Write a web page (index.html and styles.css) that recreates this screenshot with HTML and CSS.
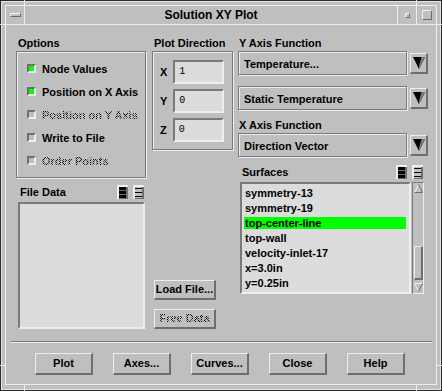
FILE: index.html
```html
<!DOCTYPE html>
<html>
<head>
<meta charset="utf-8">
<title>Solution XY Plot</title>
<link rel="stylesheet" href="styles.css">
</head>
<body>
<div class="win">
  <div class="frame">
    <div class="titlebar">
      <div class="tb-menu"><span class="tb-dash"></span></div>
      <div class="tb-title">Solution XY Plot</div>
      <div class="tb-min"><span class="tb-minbox"></span></div>
      <div class="tb-max"><span class="tb-maxbox"></span></div>
    </div>
    <div class="client">
      <div class="top">
        <div class="col1">
          <div class="lbl pl2">Options</div>
          <div class="etched options">
            <div class="opt"><span class="cb on"></span><span>Node Values</span></div>
            <div class="opt"><span class="cb on"></span><span>Position on X Axis</span></div>
            <div class="opt"><span class="cb"></span><span class="dis">Position on Y Axis</span></div>
            <div class="opt"><span class="cb"></span><span>Write to File</span></div>
            <div class="opt"><span class="cb"></span><span class="dis">Order Points</span></div>
          </div>
          <div class="listhead fdhead">
            <span class="hlbl fdlbl">File Data</span>
            <span class="icons">
              <svg class="ico" width="11" height="14" viewBox="0 0 11 14"><rect width="11" height="14" fill="#eeeeee"/><rect x="2" y="2" width="9" height="12" fill="#6e6e6e"/><rect x="2" y="2" width="7" height="3" fill="#000"/><rect x="2" y="6" width="7" height="3" fill="#000"/><rect x="2" y="10" width="7" height="3" fill="#000"/></svg>
              <svg class="ico" width="11" height="14" viewBox="0 0 11 14"><rect width="11" height="14" fill="#eeeeee"/><rect x="2" y="2" width="9" height="12" fill="#6e6e6e"/><rect x="2" y="2" width="7" height="11" fill="#bfbfbf"/><rect x="2" y="3" width="7" height="1" fill="#000"/><rect x="2" y="7" width="7" height="1" fill="#000"/><rect x="2" y="11" width="7" height="1" fill="#000"/></svg>
            </span>
          </div>
          <div class="sunken fdlist"></div>
        </div>
        <div class="col2">
          <div class="lbl pl2">Plot Direction</div>
          <div class="etched dir">
            <div class="dirrow"><span class="axl">X</span><span class="sunken field">1</span></div>
            <div class="dirrow"><span class="axl">Y</span><span class="sunken field">0</span></div>
            <div class="dirrow"><span class="axl">Z</span><span class="sunken field">0</span></div>
          </div>
          <div class="btn raised load">Load File...</div>
          <div class="btn raised free"><span class="dis">Free Data</span></div>
        </div>
        <div class="col3">
          <div class="lbl pl1">Y Axis Function</div>
          <div class="dd">
            <div class="etched ddbox">Temperature...</div>
            <div class="raised ddarrow"><svg width="12" height="12" viewBox="0 0 12 12"><polygon points="0,0 12,0 6,12" fill="#000"/><polygon points="8.5,0 12,0 6,12 6,9" fill="#7a7a7a"/></svg></div>
          </div>
          <div class="dd dd2">
            <div class="etched ddbox">Static Temperature</div>
            <div class="raised ddarrow"><svg width="12" height="12" viewBox="0 0 12 12"><polygon points="0,0 12,0 6,12" fill="#000"/><polygon points="8.5,0 12,0 6,12 6,9" fill="#7a7a7a"/></svg></div>
          </div>
          <div class="lbl pl1 xlbl">X Axis Function</div>
          <div class="dd">
            <div class="etched ddbox">Direction Vector</div>
            <div class="raised ddarrow"><svg width="12" height="12" viewBox="0 0 12 12"><polygon points="0,0 12,0 6,12" fill="#000"/><polygon points="8.5,0 12,0 6,12 6,9" fill="#7a7a7a"/></svg></div>
          </div>
          <div class="listhead sfhead">
            <span class="hlbl sflbl">Surfaces</span>
            <span class="icons">
              <svg class="ico" width="11" height="14" viewBox="0 0 11 14"><rect width="11" height="14" fill="#eeeeee"/><rect x="2" y="2" width="9" height="12" fill="#6e6e6e"/><rect x="2" y="2" width="7" height="3" fill="#000"/><rect x="2" y="6" width="7" height="3" fill="#000"/><rect x="2" y="10" width="7" height="3" fill="#000"/></svg>
              <svg class="ico" width="11" height="14" viewBox="0 0 11 14"><rect width="11" height="14" fill="#eeeeee"/><rect x="2" y="2" width="9" height="12" fill="#6e6e6e"/><rect x="2" y="2" width="7" height="11" fill="#bfbfbf"/><rect x="2" y="3" width="7" height="1" fill="#000"/><rect x="2" y="7" width="7" height="1" fill="#000"/><rect x="2" y="11" width="7" height="1" fill="#000"/></svg>
            </span>
          </div>
          <div class="sfwrap">
            <div class="sunken items">
              <div class="item">symmetry-13</div>
              <div class="item">symmetry-19</div>
              <div class="item sel">top-center-line</div>
              <div class="item">top-wall</div>
              <div class="item">velocity-inlet-17</div>
              <div class="item">x=3.0in</div>
              <div class="item">y=0.25in</div>
            </div>
            <div class="sb">
              <svg class="arr" width="9" height="9" viewBox="0 0 9 9"><polygon points="4.5,0.5 8.5,8.5 0.5,8.5" fill="#bfbfbf"/><polyline points="0.5,8.5 4.5,0.5" stroke="#f0f0f0" fill="none"/><polyline points="4.5,0.5 8.5,8.5 0.5,8.5" stroke="#6e6e6e" fill="none"/></svg>
              <div class="track"><div class="slider"></div></div>
              <svg class="arr" width="9" height="9" viewBox="0 0 9 9"><polygon points="0.5,0.5 8.5,0.5 4.5,8.5" fill="#bfbfbf"/><polyline points="4.5,8.5 0.5,0.5 8.5,0.5" stroke="#f0f0f0" fill="none"/><polyline points="8.5,0.5 4.5,8.5" stroke="#6e6e6e" fill="none"/></svg>
            </div>
          </div>
        </div>
      </div>
      <div class="sep"></div>
      <div class="btnrow">
        <div class="btn raised bb">Plot</div>
        <div class="btn raised bb">Axes...</div>
        <div class="btn raised bb">Curves...</div>
        <div class="btn raised bb">Close</div>
        <div class="btn raised bb">Help</div>
      </div>
    </div>
  </div>
  <span class="tick tv" style="left:23px;top:-1px"></span>
  <span class="tick tv" style="left:415px;top:-1px"></span>
  <span class="tick tv" style="left:23px;top:384px"></span>
  <span class="tick tv" style="left:415px;top:384px"></span>
  <span class="tick th" style="left:-1px;top:23px"></span>
  <span class="tick th" style="left:-1px;top:364px"></span>
  <span class="tick th" style="left:436px;top:23px"></span>
  <span class="tick th" style="left:436px;top:364px"></span>
</div>
</body>
</html>
```
FILE: styles.css
```css
* { box-sizing: border-box; }
html, body { margin: 0; padding: 0; background: #bfbfbf; }
body {
  font-family: "Liberation Sans", Arial, sans-serif;
  font-size: 11px;
  font-weight: bold;
  line-height: 13px;
  color: #000;
}
.win {
  position: relative;
  width: 442px;
  height: 391px;
  border: 1px solid #2a2a2a;
  padding: 4px 4px 5px 4px;
  background: #bfbfbf;
  box-shadow: inset 0 0 0 1px #e4e4e4;
}
.frame {
  height: 380px;
  border: 1px solid #eeeeee;
  display: flex;
  flex-direction: column;
}
.titlebar {
  height: 19px;
  border-bottom: 1px solid #eeeeee;
  display: flex;
}
.tb-menu {
  width: 19px;
  border-right: 1px solid #eeeeee;
  display: flex;
  align-items: center;
  justify-content: center;
}
.tb-dash, .tb-minbox, .tb-maxbox {
  border: 1px solid;
  border-color: #f4f4f4 #6a6a6a #6a6a6a #f4f4f4;
}
.tb-dash { width: 11px; height: 4px; }
.tb-title {
  flex: 1;
  text-align: center;
  font-size: 12px;
  line-height: 18px;
}
.tb-min {
  width: 19px;
  border-left: 1px solid #eeeeee;
  display: flex;
  align-items: center;
  justify-content: center;
}
.tb-minbox { width: 5px; height: 5px; }
.tb-max {
  width: 20px;
  border-left: 1px solid #eeeeee;
  display: flex;
  align-items: center;
  justify-content: center;
}
.tb-maxbox { width: 10px; height: 10px; }

.client {
  flex: 1;
  padding: 12px 8px 9px 10px;
  display: flex;
  flex-direction: column;
}
.top { display: flex; height: 292px; }
.col1 { width: 130px; display: flex; flex-direction: column; }
.col2 { width: 81px; margin-left: 6px; display: flex; flex-direction: column; }
.col3 { width: 190px; margin-left: 5px; display: flex; flex-direction: column; }

.lbl { height: 13px; margin-bottom: 1px; white-space: nowrap; }
.pl2 { padding-left: 2px; }
.pl1 { padding-left: 1px; }

.etched {
  border: 1px solid #7a7a7a;
  box-shadow: inset 1px 1px 0 #eeeeee, 1px 1px 0 #eeeeee;
}
.sunken {
  border: 2px solid;
  border-color: #7a7a7a #eeeeee #eeeeee #7a7a7a;
  background: #dcdcdc;
}
.raised {
  border-style: solid;
  border-width: 1px 2px 2px 1px;
  border-color: #eeeeee #6e6e6e #6e6e6e #eeeeee;
  background: #bfbfbf;
}

.options {
  height: 127px;
  padding: 11px 0 0 10px;
  display: flex;
  flex-direction: column;
  gap: 10px;
}
.opt { display: flex; align-items: flex-start; height: 13px; white-space: nowrap; }
.cb {
  width: 9px;
  height: 9px;
  margin-top: 1px;
  margin-right: 6px;
  border: 2px solid;
  border-color: #6e6e6e #eeeeee #eeeeee #6e6e6e;
  background: #bfbfbf;
}
.cb.on { background: #00ff00; }

.dis {
  color: transparent;
  background-image: repeating-conic-gradient(#000 0 25%, transparent 0 50%);
  background-size: 2px 2px;
  -webkit-background-clip: text;
  background-clip: text;
}

.listhead { display: flex; align-items: flex-start; height: 15px; }
.hlbl { margin-top: 1px; }
.icons { margin-left: auto; display: flex; gap: 5px; }
.ico { display: block; }
.fdhead { margin-top: 7px; margin-right: 2px; }
.fdlbl { padding-left: 4px; }
.fdlist { margin: 2px 1px 0 2px; height: 127px; }

.dir {
  height: 99px;
  padding: 8px 0 0 7px;
  display: flex;
  flex-direction: column;
  gap: 5px;
}
.dirrow { display: flex; align-items: center; height: 24px; gap: 6px; }
.field {
  width: 51px;
  height: 24px;
  padding-left: 4px;
  font-family: "Liberation Mono", "Courier New", monospace;
  font-weight: normal;
  font-size: 10px;
  line-height: 20px;
}

.btn {
  display: flex;
  align-items: center;
  justify-content: center;
  white-space: nowrap;
}
.load { margin-top: auto; margin-left: 2px; width: 62px; height: 20px; }
.free { margin-top: 9px; margin-left: 2px; width: 62px; height: 20px; }

.dd { display: flex; align-items: center; height: 24px; }
.dd2 { margin-top: 11px; }
.ddbox {
  width: 169px;
  height: 24px;
  padding: 6px 0 0 5px;
  white-space: nowrap;
}
.ddarrow {
  width: 18px;
  height: 21px;
  margin-left: 3px;
  display: flex;
  align-items: center;
  justify-content: center;
}
.ddarrow svg { display: block; }
.xlbl { margin-top: 9px; }

.sfhead { margin: 8px 5px 0 2px; }
.sflbl { padding-left: 2px; }
.sfwrap { margin: 2px 4px 0 2px; height: 112px; display: flex; gap: 1px; }
.items {
  width: 171px;
  height: 112px;
  padding: 3px 3px 0 2px;
  overflow: hidden;
}
.item {
  height: 12px;
  line-height: 13px;
  margin-bottom: 3px;
  padding-left: 1px;
  white-space: nowrap;
}
.item.sel { background: #00ff00; }
.sb {
  width: 12px;
  height: 112px;
  border: 1px solid;
  border-color: #7a7a7a #eeeeee #eeeeee #7a7a7a;
  padding: 1px 0 1px 1px;
  display: flex;
  flex-direction: column;
  align-items: flex-start;
}
.arr { display: block; flex: none; }
.track { flex: 1; display: flex; flex-direction: column; }
.slider {
  margin-top: auto;
  margin-bottom: 3px;
  width: 9px;
  height: 34px;
  border-style: solid;
  border-width: 1px 2px 2px 1px;
  border-color: #eeeeee #6e6e6e #6e6e6e #eeeeee;
}

.sep {
  margin: 12px -4px 0 -5px;
  height: 2px;
  border-top: 1px solid #7a7a7a;
  border-bottom: 1px solid #eeeeee;
}
.btnrow { margin-top: 10px; display: flex; gap: 20px; padding-left: 19px; }
.bb { width: 58px; height: 22px; }

.tick { position: absolute; background: #eeeeee; }
.tv { width: 1px; height: 6px; }
.th { width: 6px; height: 1px; }
```
